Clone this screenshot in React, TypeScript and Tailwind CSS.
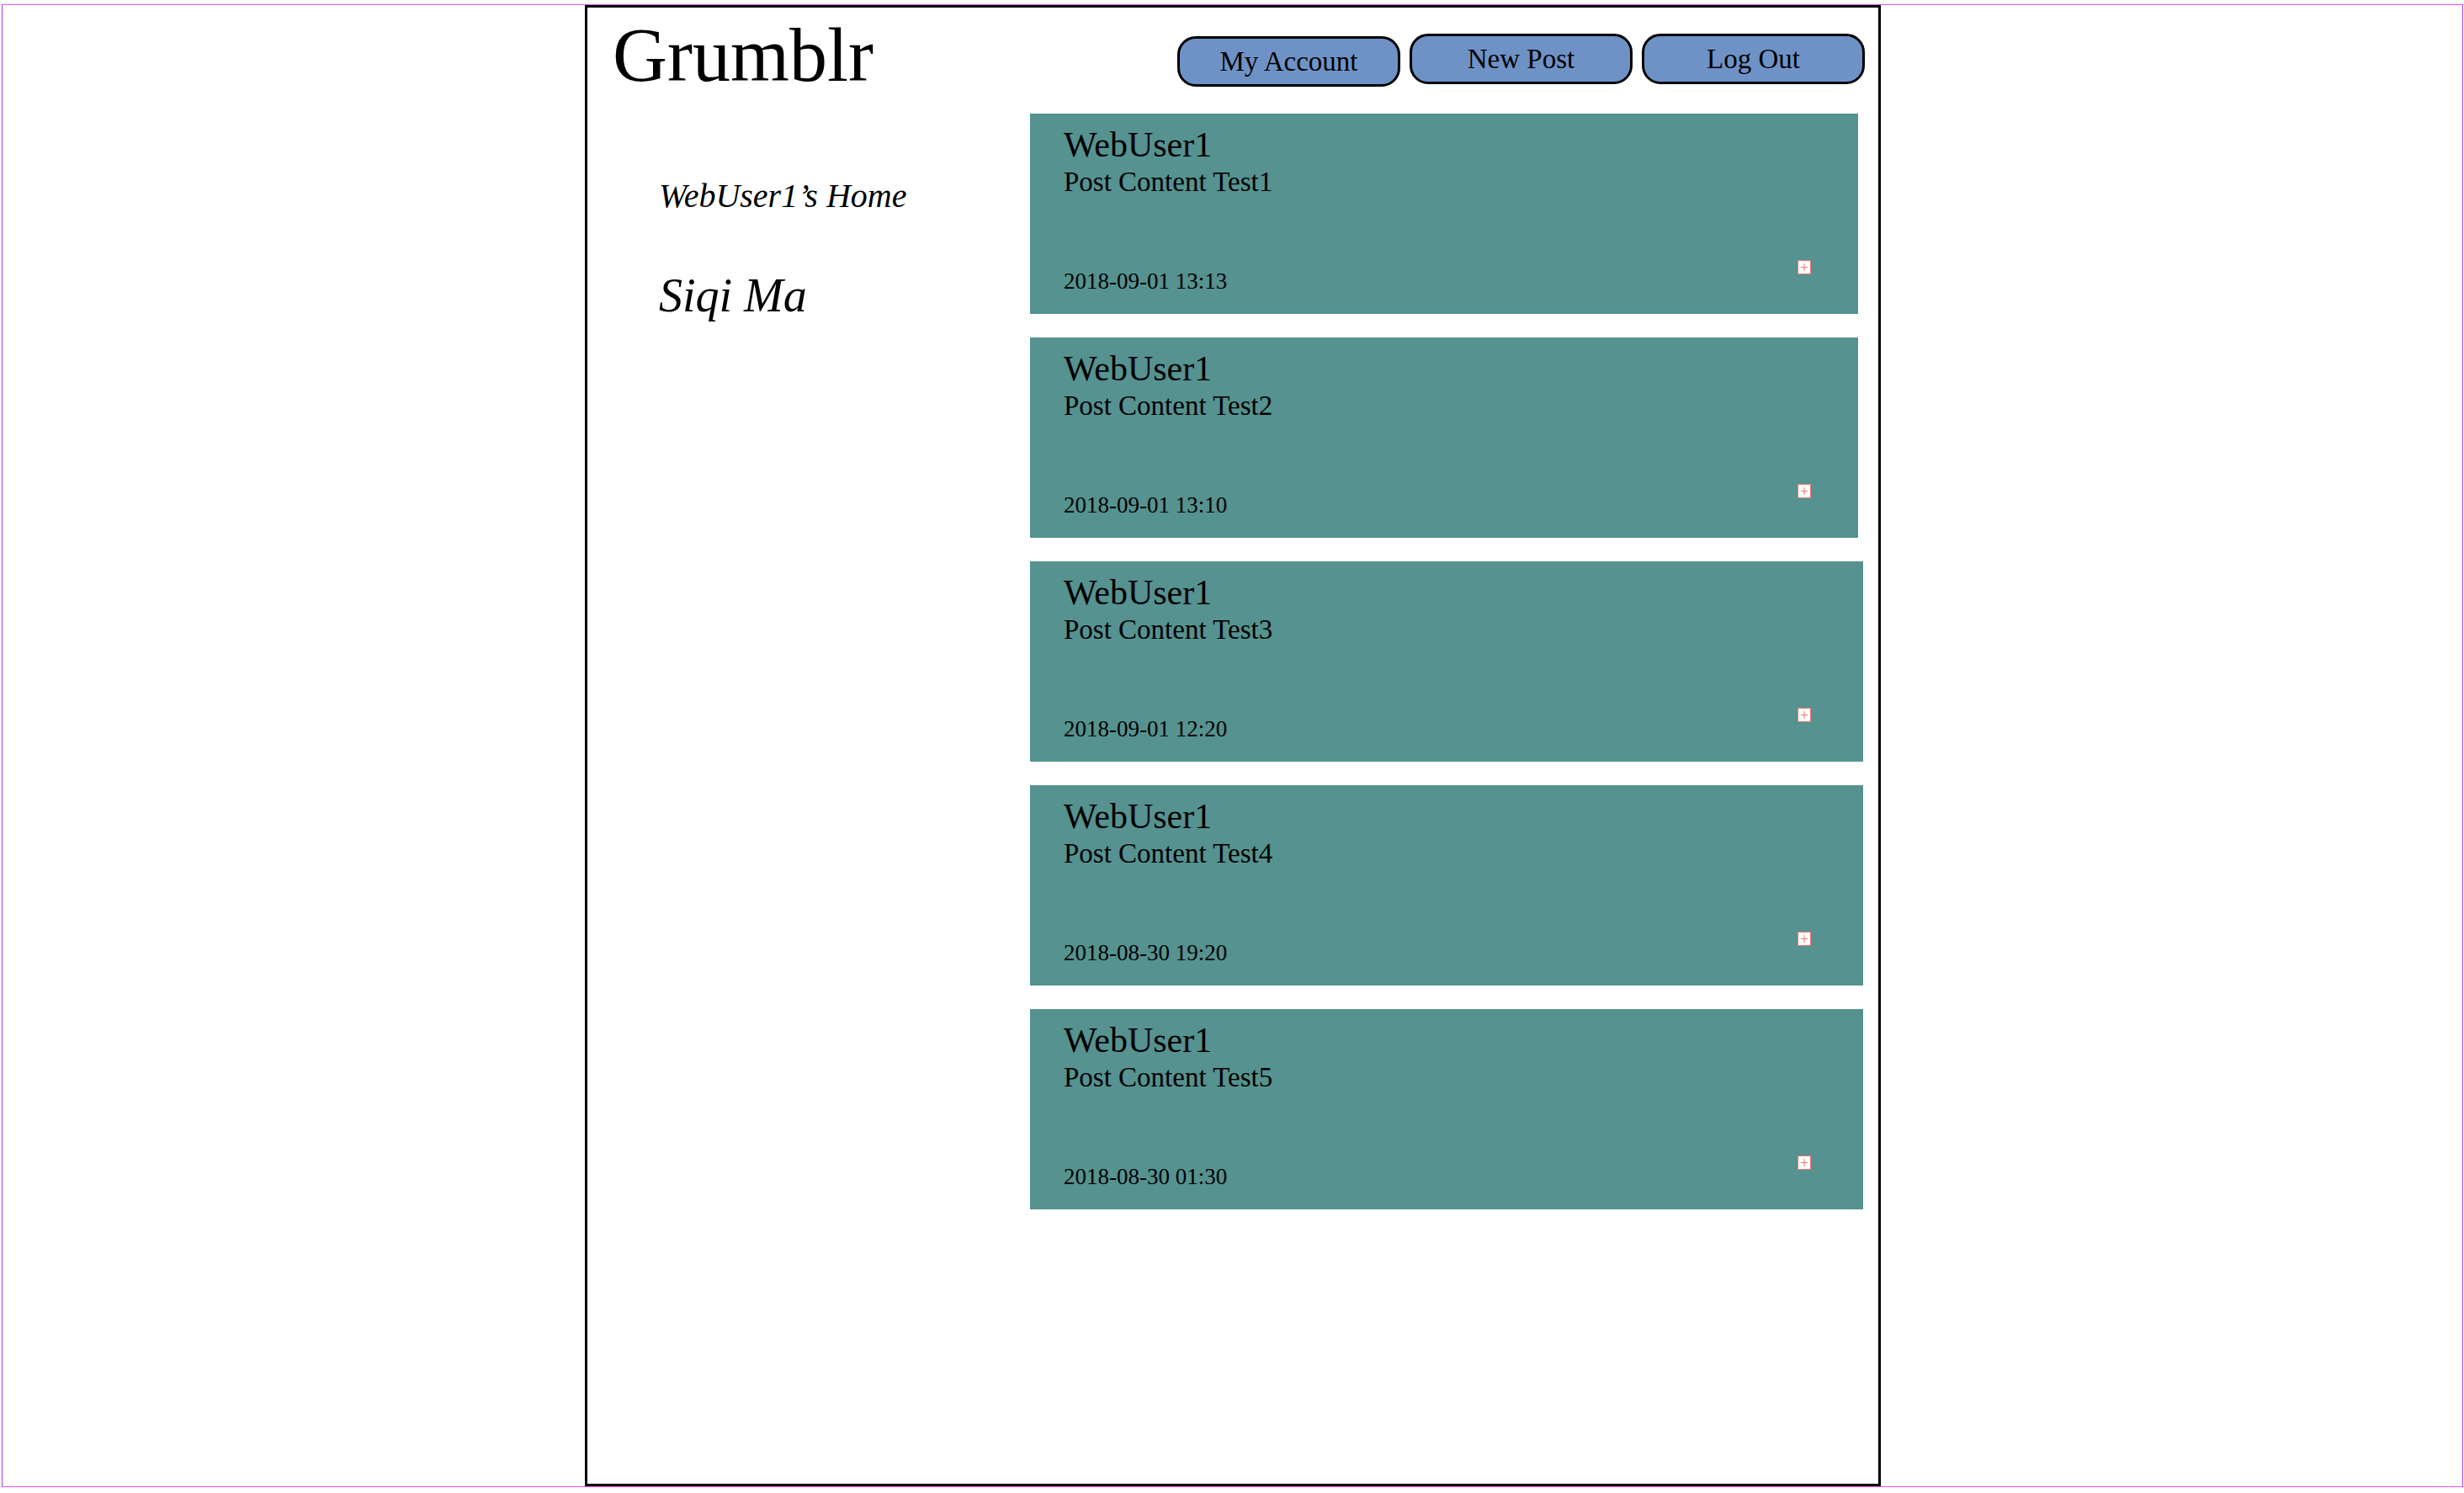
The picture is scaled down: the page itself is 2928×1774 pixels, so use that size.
import React from "react";

type Post = { content: string; date: string; wide: boolean };

const posts: Post[] = [
  { content: "Post Content Test1", date: "2018-09-01 13:13", wide: false },
  { content: "Post Content Test2", date: "2018-09-01 13:10", wide: false },
  { content: "Post Content Test3", date: "2018-09-01 12:20", wide: true },
  { content: "Post Content Test4", date: "2018-08-30 19:20", wide: true },
  { content: "Post Content Test5", date: "2018-08-30 01:30", wide: true },
];

function BrokenBox() {
  return (
    <svg width="16" height="17" viewBox="0 0 16 17" className="block">
      <rect x="0.5" y="0.5" width="15" height="16" fill="#ffffff" stroke="#f07474" strokeWidth="1" />
      <line x1="4" y1="8.5" x2="12" y2="8.5" stroke="#f07474" strokeWidth="1" />
      <line x1="8" y1="4" x2="8" y2="13" stroke="#f07474" strokeWidth="1" />
    </svg>
  );
}

function PostCard({ post }: { post: Post }) {
  return (
    <div
      className={
        (post.wide ? "w-[990px]" : "w-[984px]") +
        " h-[238px] bg-[#559290] pl-[40px] pt-[16px] pb-[25px] flex flex-col text-black"
      }
    >
      <div className="text-[42px] leading-[42px]">WebUser1</div>
      <div className="text-[33px] leading-[33px] mt-[7px]">{post.content}</div>
      <div className="mt-auto flex items-end">
        <span className="w-[872px] text-[27px] leading-[27px]">{post.date}</span>
        <span className="mb-[22px]">
          <BrokenBox />
        </span>
      </div>
    </div>
  );
}

function NavButton({ label, extra }: { label: string; extra?: string }) {
  return (
    <button
      className={
        "w-[265px] h-[60px] rounded-[22px] border-[3px] border-black bg-[#6e92c6] text-[33px] leading-none flex items-center justify-center text-black " +
        (extra ?? "")
      }
    >
      {label}
    </button>
  );
}

export default function App() {
  return (
    <div className="w-[2928px] h-[1774px] bg-white pt-[5px] pl-[2px] font-['Liberation_Serif',serif] text-black">
      <div className="w-[2925px] h-[1762px] border border-t-[#dc5cf0] border-l-[#a33cff] border-b-[#ff4cff] border-r-[#9d40e0] flex">
        <div className="ml-[692px] w-[1540px] h-[1760px] border-[3px] border-black flex flex-col">
          <header className="flex items-start h-[126px]">
            <h1 className="ml-[30px] mt-[12px] text-[90px] leading-[90px] font-normal">Grumblr</h1>
            <nav className="ml-auto mr-[16px] mt-[31px] flex items-start gap-[11px]">
              <NavButton label="My Account" extra="mt-[3px]" />
              <NavButton label="New Post" />
              <NavButton label="Log Out" />
            </nav>
          </header>
          <div className="flex flex-1">
            <aside className="w-[526px] pl-[85px] flex flex-col">
              <p className="italic text-[40px] leading-[40px] mt-[78px]">WebUser1’s Home</p>
              <p className="italic text-[56px] leading-[56px] mt-[70px]">Siqi Ma</p>
            </aside>
            <main className="flex flex-col gap-[28px]">
              {posts.map((p) => (
                <PostCard key={p.content} post={p} />
              ))}
            </main>
          </div>
        </div>
      </div>
    </div>
  );
}
